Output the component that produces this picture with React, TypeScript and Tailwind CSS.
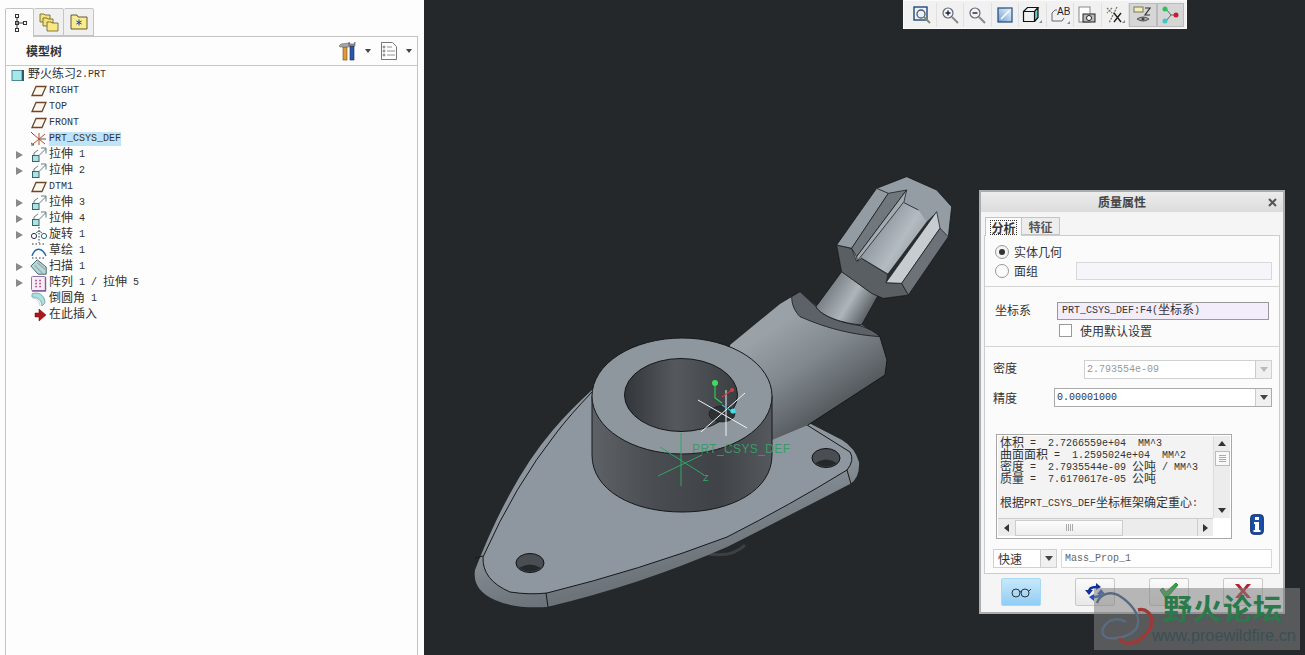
import React from "react";

const MONO = "font-['Liberation_Mono','Noto_Sans_CJK_SC',monospace]";

function T({ s, className = "" }: { s: string; className?: string }) {
  const parts = s.split(/([\u3000-\u9fff]+)/);
  return (
    <span className={`${MONO} inline-flex items-center h-[14px] text-[10px] leading-[14px] whitespace-pre ${className}`}>
      {parts.map((p, i) =>
        /[\u3000-\u9fff]/.test(p) ? (
          <span key={i} className="text-[12px] leading-[14px]">{p}</span>
        ) : (
          <span key={i}>{p}</span>
        )
      )}
    </span>
  );
}

const Plane = () => (
  <svg width="16" height="12" viewBox="0 0 16 12"><path d="M5 1.500h10L11 10.500H1Z" fill="#fdf8ee" stroke="#6e4628" strokeWidth="1.300" /></svg>
);
const Extrude = () => (
  <svg width="16" height="16" viewBox="0 0 16 16" fill="none">
    <rect x="1.500" y="8.500" width="6.500" height="6" fill="#a8e4e4" stroke="#3c6468" />
    <path d="M3 8V6l4-3M8.500 8l6-6M10 1h5v5.500" stroke="#4c6c70" strokeWidth="0.9" />
  </svg>
);
const Csys = () => (
  <svg width="18" height="16" viewBox="0 0 18 16" fill="none">
    <path d="M9 2v12M3 3l12 10M15 3L3 13" stroke="#b5512a" strokeWidth="1" />
    <path d="M10 8h6M1 1l3 3M1 14h3l-3-2" stroke="#555" />
  </svg>
);
const Revolve = () => (
  <svg width="18" height="16" viewBox="0 0 18 16" fill="none">
    <path d="M9 0v16" stroke="#334" strokeDasharray="1.500 1.500" />
    <circle cx="4" cy="9" r="2.600" stroke="#335" />
    <circle cx="14" cy="9" r="2.600" stroke="#2a6a70" />
    <path d="M6 6c2-2 4-2 6 0" stroke="#2a6a70" />
  </svg>
);
const Sketch = () => (
  <svg width="18" height="16" viewBox="0 0 18 16" fill="none">
    <path d="M2 1h14M2 15h14" stroke="#234" strokeDasharray="1.500 2" />
    <path d="M2 13C5 4 12 4 16 13" stroke="#2266aa" strokeWidth="1.300" />
  </svg>
);
const Sweep = () => (
  <svg width="20" height="18" viewBox="0 0 20 18" fill="none">
    <path d="M1 8L8 1l10 8v8H9Z" fill="#a8e0e4" stroke="#455" />
    <path d="M5 7l9 9M8 4l9 8" stroke="#b0b0b0" strokeWidth="2" />
  </svg>
);
const Pattern = () => (
  <svg width="18" height="17" viewBox="0 0 18 17" fill="none">
    <rect x="1.500" y="1.500" width="14" height="14" rx="1" fill="#f6eef6" stroke="#8a7aaa" />
    <path d="M15.500 2v14H2" stroke="#8a5a9a" strokeWidth="1.400" />
    {[6, 10].flatMap((x) => [5.5, 8.5, 11.5].map((y) => <rect key={`${x}${y}`} x={x - 0.7} y={y - 0.7} width="1.500" height="1.500" fill="#b03070" />))}
  </svg>
);
const Round = () => (
  <svg width="18" height="16" viewBox="0 0 18 16" fill="none">
    <path d="M2 3C8 0 15 4 15 12L12 15C12 9 7 6 2 6Z" fill="#a8e0e4" stroke="#8aa" />
    <path d="M2 7c4 0 8 3 8 8" stroke="#ccc" />
  </svg>
);
const Insert = () => (
  <svg width="18" height="16" viewBox="0 0 18 16"><path d="M5 6h4V2l7 6-7 6v-4H5Z" fill="#b01818" stroke="#600" strokeWidth="0.5" /></svg>
);

const rows: [boolean, React.ReactNode, string, boolean?][] = [
  [false, <Plane />, "RIGHT"],
  [false, <Plane />, "TOP"],
  [false, <Plane />, "FRONT"],
  [false, <Csys />, "PRT_CSYS_DEF", true],
  [true, <Extrude />, "拉伸 1"],
  [true, <Extrude />, "拉伸 2"],
  [false, <Plane />, "DTM1"],
  [true, <Extrude />, "拉伸 3"],
  [true, <Extrude />, "拉伸 4"],
  [true, <Revolve />, "旋转 1"],
  [false, <Sketch />, "草绘 1"],
  [true, <Sweep />, "扫描 1"],
  [true, <Pattern />, "阵列 1 / 拉伸 5"],
  [false, <Round />, "倒圆角 1"],
  [false, <Insert />, "在此插入"],
];

function LeftPanel() {
  return (
    <div className="w-[424px] h-[655px] shrink-0 bg-[#fdfdfd] pl-[5px] pr-[6px] pt-[8px] flex flex-col">
      <div className="flex h-[28px] items-stretch">
        <div className="w-[29px] h-[29px] bg-[#fdfdfd] border border-b-0 border-[#c4c4c4] rounded-t-[2px] flex items-center justify-center z-10">
          <svg width="16" height="20" viewBox="0 0 16 20" fill="none" stroke="#333">
            <rect x="3.500" y="1.500" width="3" height="3" /><rect x="3.500" y="8.500" width="3" height="3" /><rect x="11.500" y="8.500" width="3" height="3" /><rect x="3.500" y="15.500" width="3" height="3" />
            <path d="M5 4.500v11M6.500 10h5" />
          </svg>
        </div>
        <div className="w-[30px] bg-[#f0f0f0] border border-l-0 border-[#c4c4c4] rounded-t-[2px] flex items-center justify-center">
          <svg width="20" height="20" viewBox="0 0 20 20" stroke="#6a5a20" strokeWidth="0.8">
            <path d="M1 2h4l1 1h5v7H1Z" fill="#f4e27a" /><path d="M4 6h4l1 1h5v7H4Z" fill="#f4e27a" /><path d="M8 10h4l1 1h6v8H8Z" fill="#f8e888" />
          </svg>
        </div>
        <div className="w-[30px] bg-[#f0f0f0] border border-l-0 border-[#c4c4c4] rounded-t-[2px] flex items-center justify-center">
          <svg width="18" height="16" viewBox="0 0 18 16">
            <path d="M1 1h6l1 2h9v12H1Z" fill="#f8ec90" stroke="#5a4a20" strokeWidth="0.9" />
            <path d="M9 5.500v6M6.400 7l5.200 3M11.600 7l-5.200 3" stroke="#2040b0" strokeWidth="1" />
          </svg>
        </div>
      </div>
      <div className="flex-1 border-l border-r border-t border-[#c4c4c4] flex flex-col bg-[#fdfdfd]">
        <div className="h-[29px] shrink-0 border-b border-[#c8c8c8] flex items-center pl-[20px] relative">
          <span className="font-['Noto_Sans_CJK_SC',sans-serif] font-bold text-[12px] text-[#333]">模型树</span>
          <div className="ml-auto flex items-center">
            <svg width="20" height="20" viewBox="0 0 20 20">
              <rect x="5" y="6" width="4" height="13" fill="#e09838" stroke="#6a4a20" strokeWidth="0.6" />
              <rect x="12" y="5" width="4" height="14" fill="#2858a8" stroke="#18285a" strokeWidth="0.6" />
              <path d="M1 5l2-2 8-1 1 4H2Z" fill="#a8a8a8" stroke="#555" strokeWidth="0.5" />
              <path d="M11 1v4h6V1l-1 2h-4Z" fill="#999" stroke="#444" strokeWidth="0.5" />
            </svg>
            <span className="ml-[7px] w-0 h-0 border-x-[3.500px] border-x-transparent border-t-[4px] border-t-[#444]" />
            <svg className="ml-[9px]" width="18" height="20" viewBox="0 0 18 20" fill="#fff" stroke="#777">
              <path d="M1.500 1.500h11l4 4v13h-15Z" />
              <path d="M7 6h5M7 10h8M7 14h8" strokeWidth="0.8" />
              <circle cx="4" cy="6" r="1" /><circle cx="4" cy="10" r="1" /><circle cx="4" cy="14" r="1" />
            </svg>
            <span className="ml-[8px] mr-[5px] w-0 h-0 border-x-[3.500px] border-x-transparent border-t-[4px] border-t-[#444]" />
          </div>
        </div>
        <div className="pt-[1px] flex flex-col text-[#333]">
          <div className="h-[16px] flex items-center pl-[5px]">
            <svg width="14" height="13" viewBox="0 0 14 13"><rect x="1" y="1.500" width="10" height="10" fill="#a6e8ea" stroke="#4a8a90" /><rect x="11" y="1" width="2" height="11" fill="#2c5c66" /></svg>
            <T s="野火练习2.PRT" className="ml-[3px]" />
          </div>
          {rows.map(([exp, icon, label, sel], i) => (
            <div key={i} className="h-[16px] flex items-center relative pl-[24px]">
              {exp && <span className="absolute left-[10px] top-[4px] w-0 h-0 border-y-[4px] border-y-transparent border-l-[7px] border-l-[#8a8a8a]" />}
              <span className="w-[18px] h-[16px] flex items-center justify-center shrink-0">{icon}</span>
              <T s={label} className={`ml-[1px] ${sel ? "bg-[#bfe3f7]" : ""}`} />
            </div>
          ))}
        </div>
      </div>
    </div>
  );
}

function Model() {
  return (
    <svg className="absolute left-0 top-0" width="881" height="655" viewBox="424 0 881 655" fill="none">
      <defs>
        <linearGradient id="wall" x1="592" x2="772" y1="0" y2="0" gradientUnits="userSpaceOnUse">
          <stop offset="0" stopColor="#5e6267" /><stop offset="0.35" stopColor="#494c50" /><stop offset="0.7" stopColor="#3f4246" /><stop offset="1" stopColor="#55585c" />
        </linearGradient>
        <linearGradient id="hole" x1="625" x2="738" y1="0" y2="0" gradientUnits="userSpaceOnUse">
          <stop offset="0" stopColor="#33363a" /><stop offset="0.45" stopColor="#55585c" /><stop offset="1" stopColor="#3b3e42" />
        </linearGradient>
        <linearGradient id="arm" x1="770" y1="330" x2="830" y2="420" gradientUnits="userSpaceOnUse">
          <stop offset="0" stopColor="#9aa2a8" /><stop offset="0.45" stopColor="#80878d" /><stop offset="1" stopColor="#4f5458" />
        </linearGradient>
        <linearGradient id="neck" x1="130" y1="375" x2="275" y2="465" gradientUnits="userSpaceOnUse">
          <stop offset="0" stopColor="#6d7379" /><stop offset="0.55" stopColor="#aeb6bb" /><stop offset="1" stopColor="#4d5256" />
        </linearGradient>
        <linearGradient id="rim" x1="500" y1="530" x2="520" y2="610" gradientUnits="userSpaceOnUse">
          <stop offset="0" stopColor="#8e979f" /><stop offset="1" stopColor="#6c7379" />
        </linearGradient>
        <linearGradient id="center" x1="290" y1="200" x2="400" y2="270" gradientUnits="userSpaceOnUse">
          <stop offset="0" stopColor="#8f989f" /><stop offset="0.65" stopColor="#b4bcc1" /><stop offset="1" stopColor="#a0a8ae" />
        </linearGradient>
      </defs>
      <path d="M700 552Q730 560 745 545" stroke="#3c4044" strokeWidth="3" />
      <path d="M553 430Q510 480 475 570Q472 590 495 600Q515 609 547 607Q640 585 727 547Q790 515 850 484Q860 478 859 462Q855 448 842 440L807 422L650 380L592 390Q570 410 553 430Z" fill="url(#rim)" />
      <path d="M557 432Q515 485 483 557Q482 580 510 592Q530 595 547 593Q640 570 727 537Q790 505 847 470Q855 460 850 452L807 425L650 380L592 392Q570 415 557 432Z" fill="#8e979f" stroke="#16181a" strokeWidth="1" />
      <path d="M475 558L483 556M546 593L548 607M847 470L851 484" stroke="#16181a" />
      <ellipse cx="530" cy="563" rx="14" ry="9.500" fill="#4a4e52" stroke="#101214" />
      <path d="M519 568Q530 561 541 568Q530 575 519 568Z" fill="#25282a" />
      <ellipse cx="826" cy="458" rx="14" ry="9.500" fill="#4a4e52" stroke="#101214" />
      <path d="M815 463Q826 456 837 463Q826 470 815 463Z" fill="#25282a" />
      <path d="M730 345L780 304L800 292L817 307L838 322L862 325L880 337L887 360L885 375L808 425L772 440L730 400Z" fill="url(#arm)" />
      <path d="M880 337L887 360L885 375L808 425" stroke="#16181a" strokeWidth="1" />
      <g transform="translate(780 160) scale(0.33333)" strokeLinejoin="round">
        <path d="M35 410L60 395L108 440C125 470 190 490 240 497C265 505 285 515 300 530C230 525 150 510 60 470C45 455 35 435 35 410Z" fill="#5c6267" stroke="#16181a" strokeWidth="2.400" />
        <path d="M108 440L185 335L295 405L245 495C190 490 125 470 108 440Z" fill="url(#neck)" stroke="#16181a" strokeWidth="2.400" />
        <path d="M170 255L290 85L380 50L470 90L515 140L505 230L385 405L310 415L275 400L185 335Z" fill="#949da4" stroke="#16181a" strokeWidth="2.400" />
        <path d="M170 255L215 265L230 305L245 295L325 345L318 368L365 370L385 405L310 415L275 400L185 335Z" fill="#5a5f64" stroke="#16181a" strokeWidth="1.800" />
        <path d="M170 255L290 85L325 100L215 265Z" fill="#939ca3" stroke="#16181a" strokeWidth="2.400" />
        <path d="M325 100L380 90L230 290L215 265Z" fill="#70777d" stroke="#16181a" strokeWidth="2.200" />
        <path d="M380 90L372 125L232 303L230 290Z" fill="#a4acb2" stroke="#16181a" strokeWidth="2.200" />
        <path d="M372 128L415 150L440 185L325 343L245 295Z" fill="url(#center)" />
        <path d="M372 128L415 150M245 295L325 343" stroke="#16181a" strokeWidth="2.400" />
        <path d="M470 155L440 185L322 343L318 368Z" fill="#2a2d30" />
        <path d="M470 155L480 205L365 370L318 368Z" fill="#c6ccd0" stroke="#16181a" strokeWidth="2.200" />
        <path d="M480 205L505 230L385 405L365 370Z" fill="#6c7278" stroke="#16181a" strokeWidth="2.200" />
      </g>
      <path d="M592 396V455C592 490 632 512 682 512C732 512 772 490 772 455V396Z" fill="url(#wall)" stroke="#16181a" strokeWidth="1" />
      <ellipse cx="682" cy="396" rx="90" ry="58" fill="#8f979e" stroke="#16181a" strokeWidth="1" />
      <ellipse cx="681" cy="395" rx="56.500" ry="36.500" fill="url(#hole)" stroke="#16181a" strokeWidth="1" />
      <ellipse cx="722" cy="414" rx="13" ry="8" fill="#2e3134" stroke="#16181a" strokeWidth="0.6" />
      <path d="M698 400L747 428M701 432L745 393M726 390L726 436" stroke="#eef4f4" strokeWidth="1" />
      <path d="M715 385V398L722 403" stroke="#2ecc55" strokeWidth="1.200" />
      <circle cx="715" cy="383" r="3" fill="#3ddc5a" />
      <path d="M722 397L732 390" stroke="#c04040" strokeWidth="1.200" />
      <circle cx="732" cy="390" r="2" fill="#d04040" />
      <path d="M722 405L733 412" stroke="#30c0d0" strokeWidth="1.200" />
      <circle cx="733" cy="411" r="2.600" fill="#40e0e8" />
      <path d="M681 433V486M658 476L702 455M660 447L704 475" stroke="#2ea862" strokeWidth="1" />
      <text x="692" y="453" fontFamily="Liberation Sans, sans-serif" fontSize="12" textLength="98" fill="#3a9a68">PRT_CSYS_DEF</text>
      <text x="703" y="481" fontFamily="Liberation Sans, sans-serif" fontSize="9" fill="#35a868">Z</text>
    </svg>
  );
}

const ToolBtn = ({ children, on }: { children: React.ReactNode; on?: boolean }) => (
  <div className={`w-[27.500px] h-[24px] flex items-center justify-center ${on ? "bg-[#d6d6d6] border border-[#bbb]" : "border-r border-[#e0e0e0]"}`}>{children}</div>
);

function Toolbar() {
  return (
    <div className="absolute left-[479px] top-0 w-[284px] h-[29px] bg-[#f1f1f1] border border-[#fafafa] flex items-center pl-[5px]">
      <ToolBtn>
        <svg width="18" height="18" viewBox="0 0 18 18" fill="none"><rect x="1" y="1" width="13" height="13" fill="#eaf2fa" stroke="#1c4a7a" strokeWidth="1.400" /><circle cx="8" cy="8" r="4" stroke="#556" strokeWidth="1.300" /><path d="M11 11l6 6" stroke="#887" strokeWidth="2" /></svg>
      </ToolBtn>
      <ToolBtn>
        <svg width="18" height="18" viewBox="0 0 18 18" fill="none"><circle cx="7" cy="7" r="5" fill="#f4f4f4" stroke="#667" strokeWidth="1.200" /><path d="M4.500 7h5M7 4.500v5" stroke="#123" strokeWidth="1.400" /><path d="M11 11l6 6" stroke="#888" strokeWidth="2" /></svg>
      </ToolBtn>
      <ToolBtn>
        <svg width="18" height="18" viewBox="0 0 18 18" fill="none"><circle cx="7" cy="7" r="5" fill="#f4f4f4" stroke="#667" strokeWidth="1.200" /><path d="M4.500 7h5" stroke="#123" strokeWidth="1.400" /><path d="M11 11l6 6" stroke="#888" strokeWidth="2" /></svg>
      </ToolBtn>
      <ToolBtn>
        <svg width="16" height="16" viewBox="0 0 16 16" fill="none"><defs><linearGradient id="sq" x1="0" y1="1" x2="1" y2="0"><stop offset="0" stopColor="#6f9ed4" /><stop offset="1" stopColor="#f4f8fc" /></linearGradient></defs><rect x="1" y="1" width="14" height="14" fill="url(#sq)" stroke="#1c4a7a" strokeWidth="1.200" /><path d="M4 12L12 4" stroke="#fff" strokeWidth="1.500" /></svg>
      </ToolBtn>
      <ToolBtn>
        <svg width="20" height="18" viewBox="0 0 20 18" fill="none"><path d="M13 6l3-3v9l-3 3Z" fill="#5ad0d0" /><path d="M1.500 5.500h11v10h-11ZM1.500 5.500l4-4h10.500l-3.500 4M12.500 15.500l3.500-4v-10" stroke="#111" strokeWidth="1.200" /><path d="M17 17h3v-3Z" fill="#888" /></svg>
      </ToolBtn>
      <ToolBtn>
        <svg width="20" height="20" viewBox="0 0 20 20" fill="none"><path d="M2 16V8l3-3h2M2 16h10l2-3" stroke="#667" /><text x="7" y="10" fontFamily="Liberation Sans, sans-serif" fontSize="10" fill="#223">AB</text><path d="M17 19h3v-3Z" fill="#888" /></svg>
      </ToolBtn>
      <ToolBtn>
        <svg width="18" height="18" viewBox="0 0 18 18" fill="none"><rect x="1" y="1" width="11" height="15" fill="#fff" stroke="#888" /><rect x="5" y="8" width="12" height="8" fill="#bbb" stroke="#222" /><circle cx="11" cy="12" r="2.500" fill="#fff" stroke="#222" /></svg>
      </ToolBtn>
      <ToolBtn>
        <svg width="20" height="18" viewBox="0 0 20 18" fill="none"><path d="M2 2l5 5M7 2L2 7M12 1L4 17" stroke="#776" strokeDasharray="2 1" strokeWidth="1.300" /><path d="M9 7l7 9M16 7l-7 9" stroke="#222" strokeWidth="1.400" /><path d="M17 17h3v-3Z" fill="#888" /></svg>
      </ToolBtn>
      <ToolBtn on>
        <svg width="20" height="20" viewBox="0 0 20 20" fill="none"><rect x="1" y="2" width="9" height="5" fill="#f4eeb0" stroke="#776" /><path d="M12 3h5l-5 7h5" stroke="#333" strokeWidth="1.200" /><path d="M4 14q6-4 12 0q-6 4-12 0Z" fill="#aaa" stroke="#555" /><circle cx="10" cy="14" r="1.500" fill="#444" /></svg>
      </ToolBtn>
      <ToolBtn on>
        <svg width="20" height="20" viewBox="0 0 20 20" fill="none"><path d="M6 4l5 6h5M6 16l5-6" stroke="#666" /><circle cx="5" cy="4" r="2.500" fill="#2ec060" /><circle cx="5" cy="16" r="2.500" fill="#40c8c8" /><circle cx="16" cy="10" r="2.500" fill="#c02030" /></svg>
      </ToolBtn>
    </div>
  );
}

const Label = ({ children, className = "" }: { children: React.ReactNode; className?: string }) => (
  <span className={`font-['Noto_Sans_CJK_SC',sans-serif] text-[12px] leading-[14px] text-[#333] ${className}`}>{children}</span>
);

const Arrow = ({ disabled }: { disabled?: boolean }) => (
  <span className="w-[16px] self-stretch shrink-0 border-l border-[#ccc] bg-[#f0f0f0] flex items-center justify-center">
    <span className={`w-0 h-0 border-x-[4px] border-x-transparent border-t-[5px] ${disabled ? "border-t-[#bbb]" : "border-t-[#444]"}`} />
  </span>
);

const DlgBtn = ({ children, on }: { children: React.ReactNode; on?: boolean }) => (
  <div className={`w-[40px] h-[28px] rounded-[2px] border flex items-center justify-center ${on ? "bg-gradient-to-b from-[#c8e8fb] to-[#8fcdf5] border-[#a8d8f4]" : "bg-gradient-to-b from-[#fbfbfb] to-[#e8e8e8] border-[#c8c8c8]"}`}>{children}</div>
);

const textLines = [
  "体积 =  2.7266559e+04  MM^3",
  "曲面面积 =  1.2595024e+04  MM^2",
  "密度 =  2.7935544e-09 公吨 / MM^3",
  "质量 =  7.6170617e-05 公吨",
  " ",
  "根据PRT_CSYS_DEF坐标框架确定重心:",
];

function Dialog() {
  return (
    <div className="absolute left-[555px] top-[190px] w-[306px] h-[424px] border-2 border-[#aaacae] bg-[#f5f5f5] flex flex-col">
      <div className="h-[20px] shrink-0 bg-gradient-to-b from-[#ececec] to-[#dcdcdc] flex items-center justify-center relative">
        <span className="font-['Noto_Sans_CJK_SC',sans-serif] font-bold text-[12px] text-[#444] pr-[20px]">质量属性</span>
        <svg className="absolute right-[6px] top-[6px]" width="9" height="9" viewBox="0 0 9 9"><path d="M1 1l7 7M8 1L1 8" stroke="#555" strokeWidth="2" /></svg>
      </div>
      <div className="h-[23px] shrink-0 flex items-end pl-[4px]">
        <div className="w-[37px] h-[19px] bg-[#fbfbfb] border border-b-0 border-[#c4c4c4] flex items-center justify-center -mb-px z-10">
          <span className="border border-dotted border-[#333] font-['Noto_Sans_CJK_SC',sans-serif] font-bold text-[12px] leading-[13px] text-[#333]">分析</span>
        </div>
        <div className="w-[38px] h-[18px] bg-[#ededed] border border-l-0 border-[#c4c4c4] flex items-center justify-center">
          <span className="font-['Noto_Sans_CJK_SC',sans-serif] font-bold text-[12px] leading-[13px] text-[#555]">特征</span>
        </div>
      </div>
      <div className="mx-[3px] h-[339px] shrink-0 bg-[#fbfbfb] border border-[#cdcdcd] flex flex-col">
        <div className="h-[51px] shrink-0 border-b border-[#d4d4d4] pl-[10px] pr-[7px] pt-[7px] flex flex-col">
          <div className="h-[18px] flex items-center">
            <span className="w-[14px] h-[14px] rounded-full border border-[#999] bg-[#f4f4f4] flex items-center justify-center">
              <span className="w-[6px] h-[6px] rounded-full bg-[#333]" />
            </span>
            <Label className="ml-[5px]">实体几何</Label>
          </div>
          <div className="h-[18px] flex items-center mt-[1px]">
            <span className="w-[14px] h-[14px] rounded-full border border-[#999] bg-[#fbfbfb]" />
            <Label className="ml-[5px]">面组</Label>
            <div className="ml-auto w-[196px] h-[18px] border border-[#d8d8d8] bg-[#f6f5fa]" />
          </div>
        </div>
        <div className="h-[60px] shrink-0 border-b border-[#d4d4d4] pl-[10px] pr-[10px] pt-[15px]">
          <div className="flex items-center h-[18px]">
            <Label className="-mt-[3px]">坐标系</Label>
            <div className="ml-auto w-[212px] h-[18px] border border-[#999] bg-[#f2ecfb] flex items-center pl-[4px]">
              <T s="PRT_CSYS_DEF:F4(坐标系)" className="text-[#333]" />
            </div>
          </div>
          <div className="flex items-center h-[13px] mt-[4px] pl-[64px]">
            <span className="w-[13px] h-[13px] border border-[#999] bg-white" />
            <Label className="ml-[8px]">使用默认设置</Label>
          </div>
        </div>
        <div className="flex-1 pl-[8px] pr-[7px] flex flex-col">
          <div className="flex items-center h-[19px] mt-[13px]">
            <Label className="-mt-[4px]">密度</Label>
            <div className="ml-auto w-[188px] h-[19px] border border-[#d0d0d0] bg-white flex items-center">
              <T s="2.793554e-09" className="pl-[2px] flex-1 text-[#999]" />
              <Arrow disabled />
            </div>
          </div>
          <div className="flex items-center h-[19px] mt-[9px]">
            <Label>精度</Label>
            <div className="ml-auto w-[218px] h-[19px] border border-[#aaa] bg-white flex items-center">
              <T s="0.00001000" className="pl-[2px] flex-1 text-[#333]" />
              <Arrow />
            </div>
          </div>
          <div className="flex mt-[27px] pl-[3px]">
            <div className="w-[236px] h-[105px] border border-[#a8a8a8] bg-white p-[1px] flex flex-col">
              <div className="flex h-[82px] bg-[#f3f3f3]">
                <div className="flex-1 pt-[2px] pl-[2px] overflow-hidden flex flex-col text-[#333]">
                  {textLines.map((l, i) => (
                    <div key={i} className="h-[12px] flex items-center"><T s={l} /></div>
                  ))}
                </div>
                <div className="w-[17px] bg-[#ececec] border-l border-[#ddd] flex flex-col items-center">
                  <span className="h-[15px] flex items-center"><span className="w-0 h-0 border-x-[4px] border-x-transparent border-b-[5px] border-b-[#333]" /></span>
                  <span className="w-[15px] h-[15px] bg-[#f8f8f8] border border-[#bbb] flex flex-col justify-center gap-[1px] px-[3px]">
                    <span className="h-px bg-[#aaa]" /><span className="h-px bg-[#aaa]" /><span className="h-px bg-[#aaa]" /><span className="h-px bg-[#aaa]" />
                  </span>
                  <span className="mt-auto h-[15px] flex items-center"><span className="w-0 h-0 border-x-[4px] border-x-transparent border-t-[5px] border-t-[#333]" /></span>
                </div>
              </div>
              <div className="flex h-[18px] bg-[#ececec] border-t border-[#ccc] mr-[17px] items-center">
                <span className="w-[17px] flex justify-center"><span className="w-0 h-0 border-y-[4px] border-y-transparent border-r-[5px] border-r-[#333]" /></span>
                <span className="w-[108px] h-[16px] bg-gradient-to-b from-[#fdfdfd] to-[#ededed] border border-[#ccc] flex justify-center items-center gap-[1px]">
                  <span className="w-px h-[7px] bg-[#aaa]" /><span className="w-px h-[7px] bg-[#aaa]" /><span className="w-px h-[7px] bg-[#aaa]" /><span className="w-px h-[7px] bg-[#aaa]" />
                </span>
                <span className="flex-1" />
                <span className="w-[16px] flex justify-center border-l border-[#ccc] h-full items-center"><span className="w-0 h-0 border-y-[4px] border-y-transparent border-l-[5px] border-l-[#333]" /></span>
              </div>
            </div>
            <div className="flex-1 flex items-end justify-end pr-[8px] pb-[4px]">
              <svg width="14" height="21" viewBox="0 0 14 21"><rect x="0.700" y="0.700" width="12.600" height="19.600" rx="3" fill="#1a4ea8" stroke="#0c2a68" /><rect x="5" y="3" width="4" height="3" fill="#fff" /><path d="M4 8h5v8h1.500v2H3.500v-2H5v-6H4Z" fill="#fff" /></svg>
            </div>
          </div>
          <div className="flex mt-[10px] h-[19px]">
            <div className="w-[64px] border border-[#d0d0d0] bg-white flex items-center">
              <Label className="pl-[4px] flex-1">快速</Label>
              <Arrow />
            </div>
            <div className="ml-[4px] w-[211px] border border-[#d8d8d8] bg-white flex items-center pl-[3px]">
              <T s="Mass_Prop_1" className="text-[#666]" />
            </div>
          </div>
        </div>
      </div>
      <div className="flex pl-[20px] gap-[34px] mt-[4px]">
        <DlgBtn on>
          <svg width="22" height="12" viewBox="0 0 22 12" fill="none" stroke="#333"><circle cx="6" cy="7" r="4" /><circle cx="15" cy="7" r="4" /><path d="M10 6q1-1 2 0M19 5l2-2" /></svg>
        </DlgBtn>
        <DlgBtn>
          <svg width="22" height="20" viewBox="0 0 22 20" fill="none"><path d="M5 10C5 6 9 5 12 5" stroke="#12309a" strokeWidth="2.500" /><path d="M12 1l5 4-5 3Z M1 8h8l-4 5Z" fill="#12309a" /><path d="M17 10C17 14 13 15 10 15" stroke="#1f4fc0" strokeWidth="2.500" /><path d="M10 12l-5 3 5 4Z M13 12h8l-4-5Z" fill="#1f4fc0" /></svg>
        </DlgBtn>
        <DlgBtn>
          <svg width="20" height="18" viewBox="0 0 20 18" className="-mt-[2px]"><path d="M1 8l3-2 3 4L17 1l2 2L7 17Z" fill="#22b030" stroke="#1a7030" strokeWidth="0.8" /></svg>
        </DlgBtn>
        <DlgBtn>
          <svg width="18" height="18" viewBox="0 0 18 18" className="-mt-[2px]"><path d="M1 2h4l4 5 4-5h4l-6 7 6 7h-4l-4-5-4 5H1l6-7Z" fill="#b8222c" /></svg>
        </DlgBtn>
      </div>
    </div>
  );
}

function Watermark() {
  return (
    <div className="absolute left-[670px] top-[588px] w-[206px] h-[62px] bg-[#828282]/55 flex">
      <svg width="60" height="62" viewBox="0 0 60 62" fill="none" className="shrink-0">
        <path d="M3 15C6 6 16 3 24 7C36 14 46 26 44 36C42 46 26 52 14 50C8 48 6 42 12 36C18 30 26 30 32 34" stroke="#5a6a80" strokeWidth="2.500" />
        <path d="M44 22C52 20 58 26 58 34C56 46 44 56 32 55C28 54 26 52 26 50" stroke="#a03838" strokeWidth="3.500" />
      </svg>
      <div className="flex flex-col pt-[1px] -ml-[8px]">
        <span className="font-['Noto_Sans_CJK_SC',sans-serif] font-bold text-[29px] leading-[36px] tracking-[1px] text-[#2a7a4c] pl-[17px] whitespace-nowrap">野火论坛</span>
        <span className="font-['Liberation_Sans',sans-serif] text-[16.300px] leading-[20px] text-[#3c4f57] pl-[6px] whitespace-nowrap">www.proewildfire.cn</span>
      </div>
    </div>
  );
}

export default function App() {
  return (
    <div className="flex w-[1305px] h-[655px] overflow-hidden">
      <LeftPanel />
      <div className="relative flex-1 h-[655px] bg-[#24282a]">
        <Model />
        <Toolbar />
        <Dialog />
        <Watermark />
      </div>
    </div>
  );
}
